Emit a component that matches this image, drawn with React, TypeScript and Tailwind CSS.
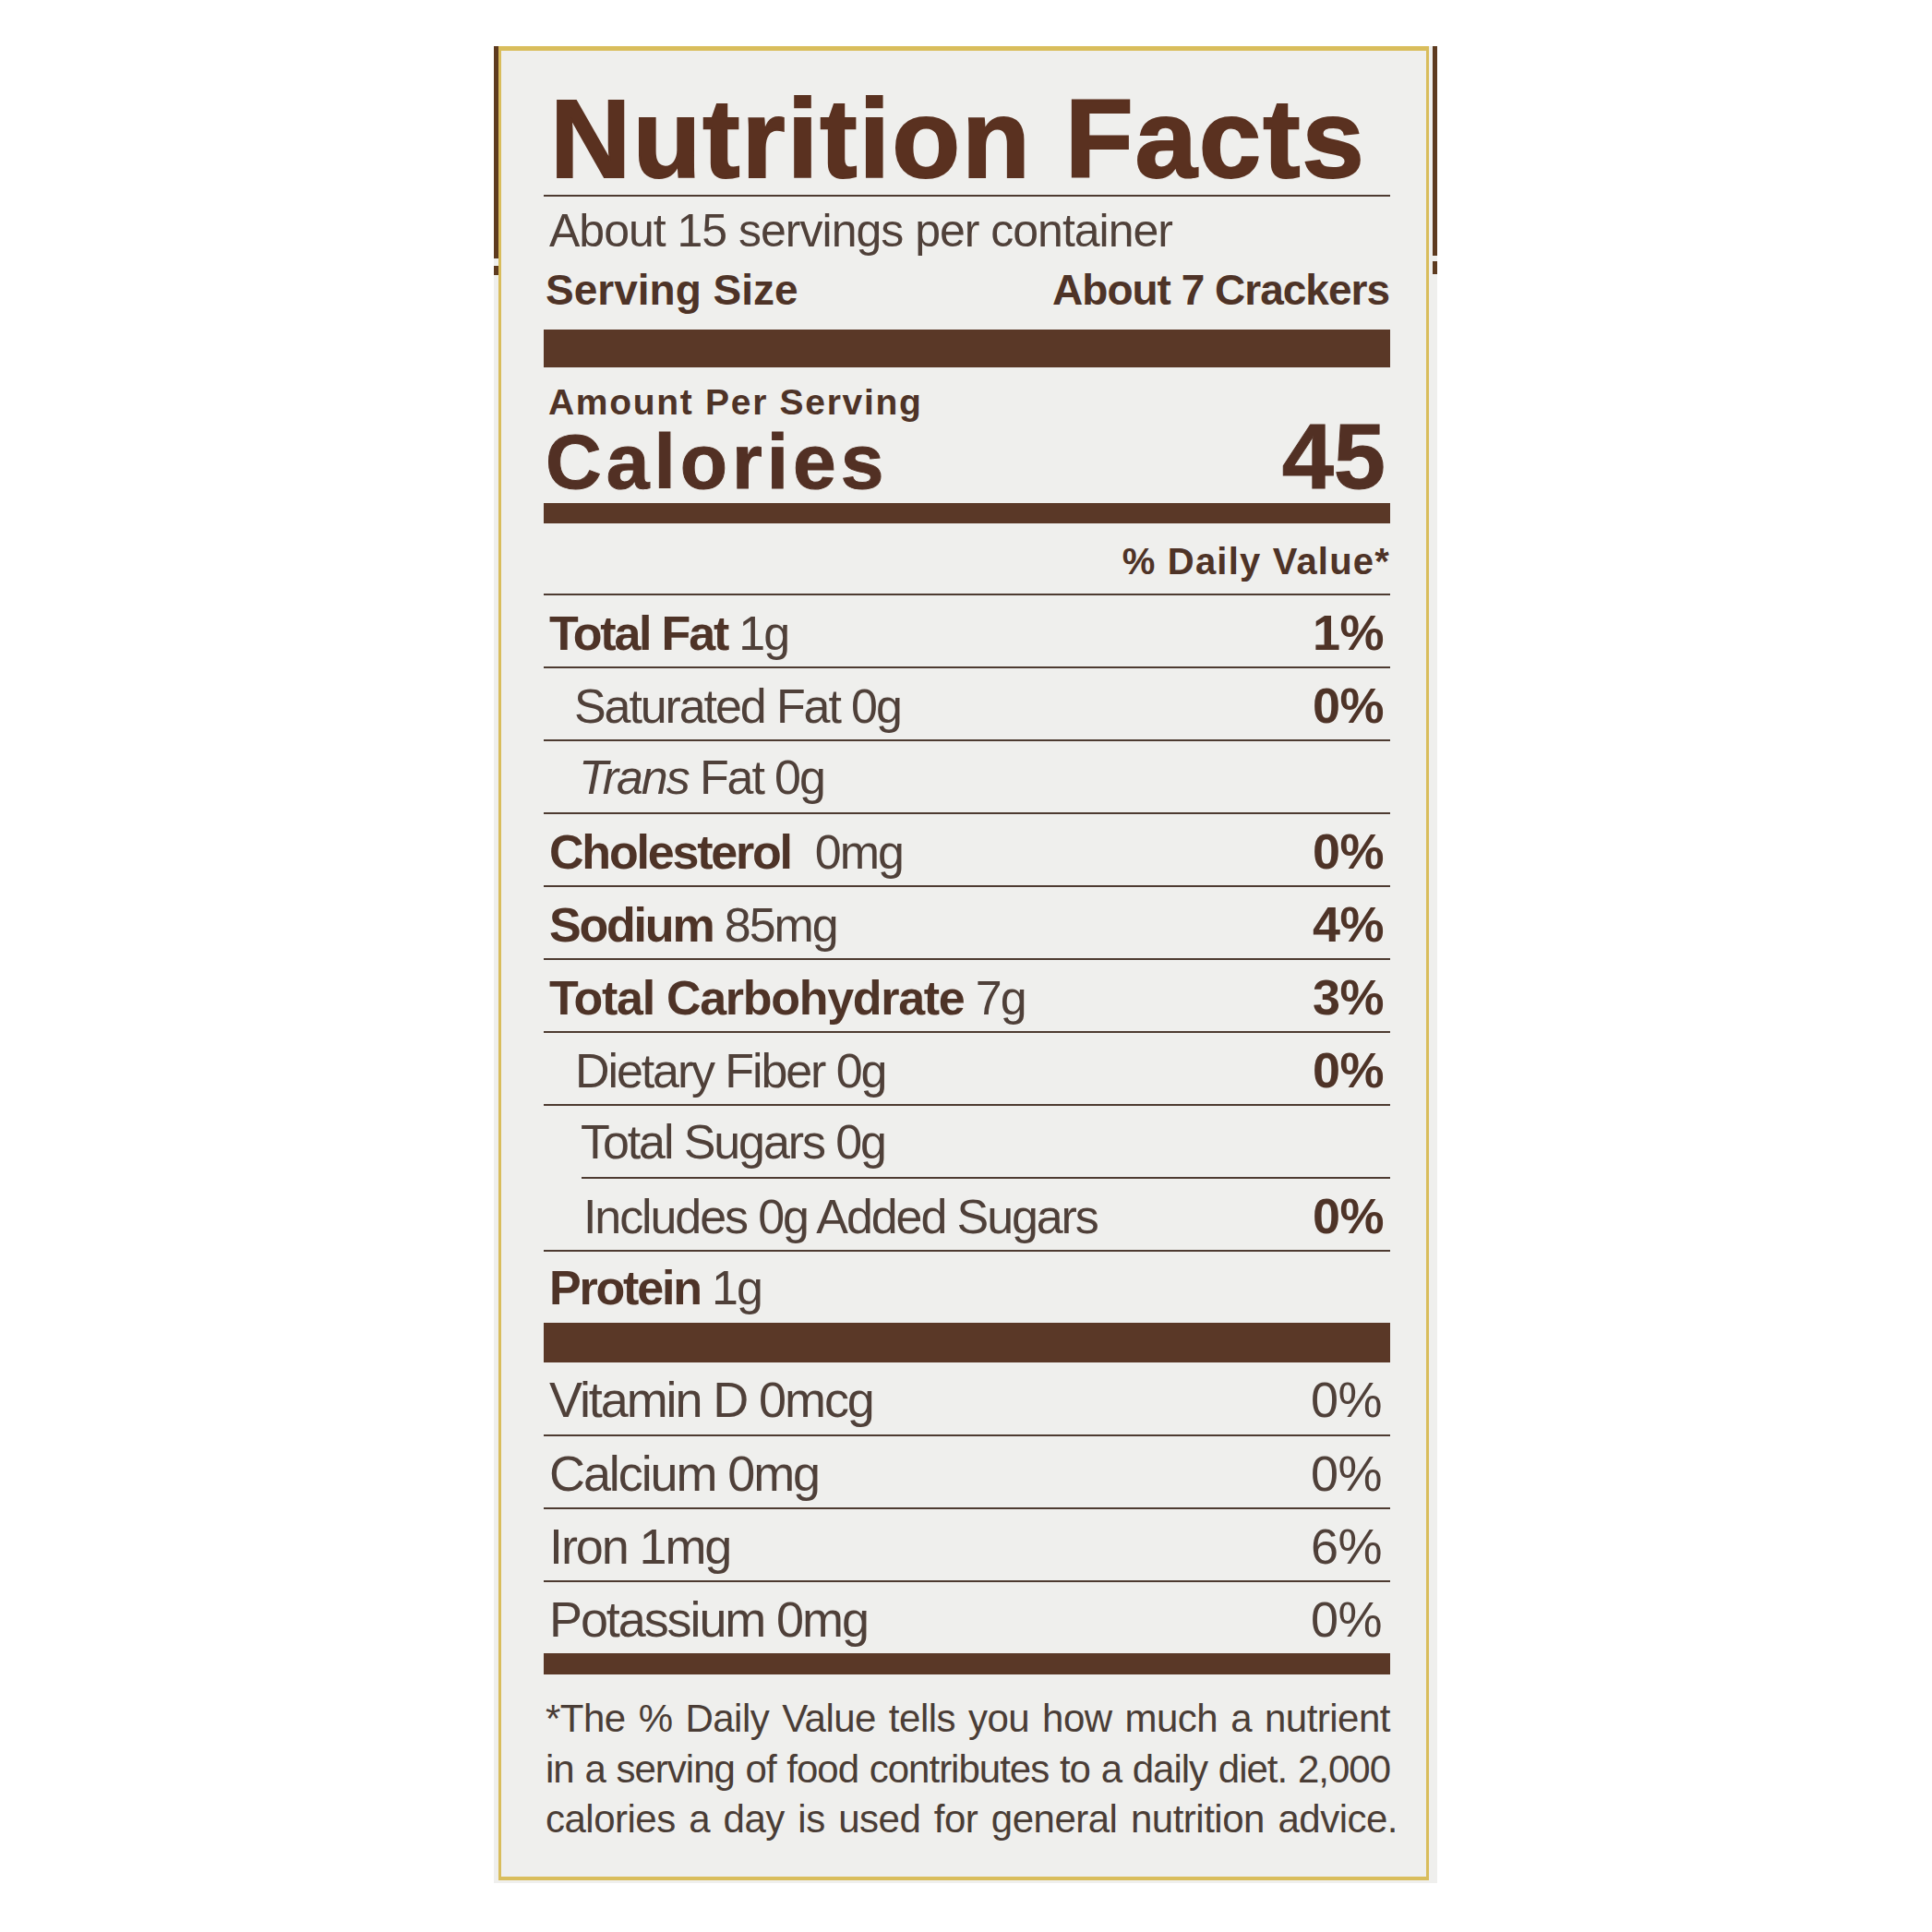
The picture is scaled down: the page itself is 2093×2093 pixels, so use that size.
import React from "react";

// Nutrition Facts panel (cracker box)

const font = "font-['Liberation_Sans',Arial,sans-serif]";

function Rule({ className = "" }: { className?: string }) {
  return <div className={`h-[2px] bg-[#4d3b31] ${className}`} />;
}

function Bar({ className = "" }: { className?: string }) {
  return <div className={`bg-[#5a3827] ${className}`} />;
}

function Row({
  children,
  pct,
  className = "",
}: {
  children: React.ReactNode;
  pct?: string;
  className?: string;
}) {
  return (
    <div className={`${font} flex h-[77px] items-baseline justify-between pr-[7px] pt-[13px] leading-none ${className}`}>
      <div className="whitespace-pre text-[52px] tracking-[-2.1px] text-[#4f4039]">{children}</div>
      {pct ? <div className="text-[54px] font-bold tracking-[-0.5px] text-[#4e3327]">{pct}</div> : null}
    </div>
  );
}

function VitaminRow({ label, pct, className = "" }: { label: string; pct: string; className?: string }) {
  return (
    <div className={`${font} flex items-baseline justify-between pl-[6px] pr-[9px] pt-[13px] leading-none text-[#4f4039] ${className}`}>
      <div className="text-[54px] tracking-[-2.1px]">{label}</div>
      <div className="text-[54px] tracking-[-0.5px]">{pct}</div>
    </div>
  );
}

function B({ children, className = "tracking-[-2.2px]" }: { children: React.ReactNode; className?: string }) {
  return <span className={`font-bold text-[#4e3327] ${className}`}>{children}</span>;
}

export default function App() {
  return (
    <div className="h-[2093px] w-[2093px] bg-white pl-[535px] pt-[50px]">
      <div className="relative h-[1990px] w-[1022px] bg-[#efefed] pb-[3px] pl-[5px] pr-[9px]">
        {/* carton edges */}
        <div className="absolute left-0 top-0 h-[230px] w-[5px] bg-[#5e3b1f]" />
        <div className="absolute left-0 top-[238px] h-[10px] w-[5px] bg-[#5e3b1f]" />
        <div className="absolute right-0 top-0 h-[227px] w-[5px] bg-[#5e3b1f]" />
        <div className="absolute right-0 top-[233px] h-[14px] w-[5px] bg-[#5e3b1f]" />

        <div className={`${font} h-full border-x-[3px] border-b-[4px] border-t-[5px] border-[#d9bd5c] pl-[46px] pr-[39px] pt-[35px]`}>
          <h1 className="ml-[7px] text-[121px] font-bold leading-none tracking-[2px] text-[#5a3120] [-webkit-text-stroke:2px_#5a3120]">
            Nutrition Facts
          </h1>
          <Rule />
          <p className="mt-[12px] pl-[6px] text-[50px] leading-none tracking-[-1px] text-[#4f4039]">
            About 15 servings per container
          </p>
          <div className="mt-[16px] flex justify-between pl-[2px] pr-[1px] text-[46px] font-bold leading-none text-[#4e3327]">
            <span>Serving Size</span>
            <span className="tracking-[-1px]">About 7 Crackers</span>
          </div>

          <Bar className="mt-[20px] h-[41px]" />

          <p className="mt-[18px] pl-[5px] text-[39px] font-bold leading-none tracking-[1.7px] text-[#4e3327]">
            Amount Per Serving
          </p>
          <div className="-mt-[11px] flex items-baseline justify-between pl-[2px] pr-[5px] font-bold leading-none text-[#523024]">
            <span className="text-[84px] tracking-[5px] [-webkit-text-stroke:1px_#523024]">Calories</span>
            <span className="text-[101px] [-webkit-text-stroke:1px_#523024]">45</span>
          </div>
          <Bar className="h-[22px]" />

          <p className="mt-[21px] text-right text-[40px] font-bold leading-none tracking-[1.2px] text-[#4e3327]">
            % Daily Value*
          </p>

          <Rule className="mt-[15px]" />
          <Row pct="1%" className="pl-[6px]">
            <B>Total Fat</B> 1g
          </Row>
          <Rule />
          <Row pct="0%" className="pl-[33px]">
            Saturated Fat 0g
          </Row>
          <Rule />
          <Row className="pl-[38px]">
            <i>Trans</i> Fat 0g
          </Row>
          <Rule />
          <Row pct="0%" className="pl-[6px]">
            <B>Cholesterol</B>
            <span className="ml-[26px]">0mg</span>
          </Row>
          <Rule />
          <Row pct="4%" className="pl-[6px]">
            <B>Sodium</B> 85mg
          </Row>
          <Rule />
          <Row pct="3%" className="pl-[6px]">
            <B className="tracking-[-1.3px]">Total Carbohydrate</B> 7g
          </Row>
          <Rule />
          <Row pct="0%" className="pl-[34px]">
            Dietary Fiber 0g
          </Row>
          <Rule />
          <Row className="pl-[40px]">Total Sugars 0g</Row>
          <Rule className="ml-[41px]" />
          <Row pct="0%" className="pl-[43px]">
            Includes 0g Added Sugars
          </Row>
          <Rule />
          <Row className="pl-[6px]">
            <B>Protein</B> 1g
          </Row>

          <Bar className="h-[43px]" />
          <VitaminRow label="Vitamin D 0mcg" pct="0%" className="h-[78px]" />
          <Rule />
          <VitaminRow label="Calcium 0mg" pct="0%" className="h-[77px]" />
          <Rule />
          <VitaminRow label="Iron 1mg" pct="6%" className="h-[77px]" />
          <Rule />
          <VitaminRow label="Potassium 0mg" pct="0%" className="h-[77px]" />
          <Bar className="h-[23px]" />

          <div className="mt-[21px] pl-[2px] text-[42px] leading-[54.5px] text-[#4a3d36]">
            <p className="text-justify tracking-[-0.5px] [text-align-last:justify]">
              *The % Daily Value tells you how much a nutrient
            </p>
            <p className="text-justify tracking-[-1px] [word-spacing:-4px] [text-align-last:justify]">
              in a serving of food contributes to a daily diet. 2,000
            </p>
            <p className="-mr-[8px] text-justify tracking-[-0.5px] [word-spacing:-3px] [text-align-last:justify]">
              calories a day is used for general nutrition advice.
            </p>
          </div>
        </div>
      </div>
    </div>
  );
}
